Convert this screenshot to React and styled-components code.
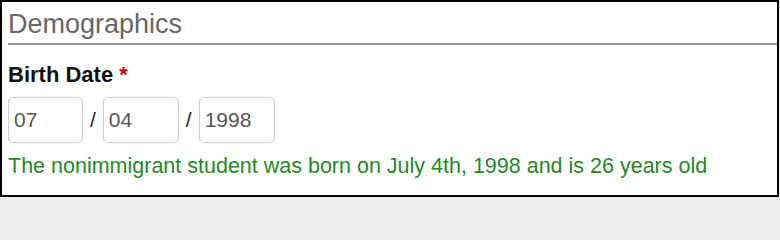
import React from "react";
import styled, { createGlobalStyle } from "styled-components";

const Global = createGlobalStyle`
  html, body { margin: 0; padding: 0; background: #ececec; }
  body { font-family: "Liberation Sans", Arial, sans-serif; }
`;

const Panel = styled.section`
  box-sizing: border-box;
  width: 779px;
  height: 197px;
  border: 2px solid #000;
  background: #fff;
  padding: 6.5px 0 0 6px;
  display: flex;
  flex-direction: column;
`;

const Heading = styled.h2`
  margin: 0;
  font-weight: normal;
  font-size: 27px;
  line-height: 31px;
  color: #666;
  padding-bottom: 3.5px;
  border-bottom: 2px solid #9a9a9a;
`;

const Field = styled.div`
  margin-top: 16.5px;
  display: flex;
  flex-direction: column;
`;

const Label = styled.label`
  font-size: 22px;
  line-height: 25px;
  font-weight: bold;
  color: #111;
`;

const Required = styled.span`
  color: #d40000;
`;

const DateRow = styled.div`
  margin-top: 10.5px;
  display: flex;
  align-items: center;
  gap: 7px;
`;

const DateInput = styled.input`
  box-sizing: border-box;
  width: ${(p) => p.$w}px;
  height: 46px;
  border: 1px solid #ccc;
  border-radius: 5px;
  padding: 0 0 0 5px;
  font-family: "Liberation Sans", Arial, sans-serif;
  font-size: 21px;
  color: #555;
  background: #fff;
  outline: none;
`;

const Slash = styled.span`
  font-size: 21px;
  color: #222;
`;

const Note = styled.p`
  margin: 10.5px 0 0;
  font-size: 21.5px;
  line-height: 25px;
  color: #228b22;
`;

export default function App() {
  return (
    <>
      <Global />
      <Panel>
        <Heading>Demographics</Heading>
        <Field>
          <Label>
            Birth Date <Required>*</Required>
          </Label>
          <DateRow>
            <DateInput $w={75} defaultValue="07" />
            <Slash>/</Slash>
            <DateInput $w={76} defaultValue="04" />
            <Slash>/</Slash>
            <DateInput $w={76} defaultValue="1998" />
          </DateRow>
        </Field>
        <Note>
          The nonimmigrant student was born on July 4th, 1998 and is 26 years old
        </Note>
      </Panel>
    </>
  );
}
